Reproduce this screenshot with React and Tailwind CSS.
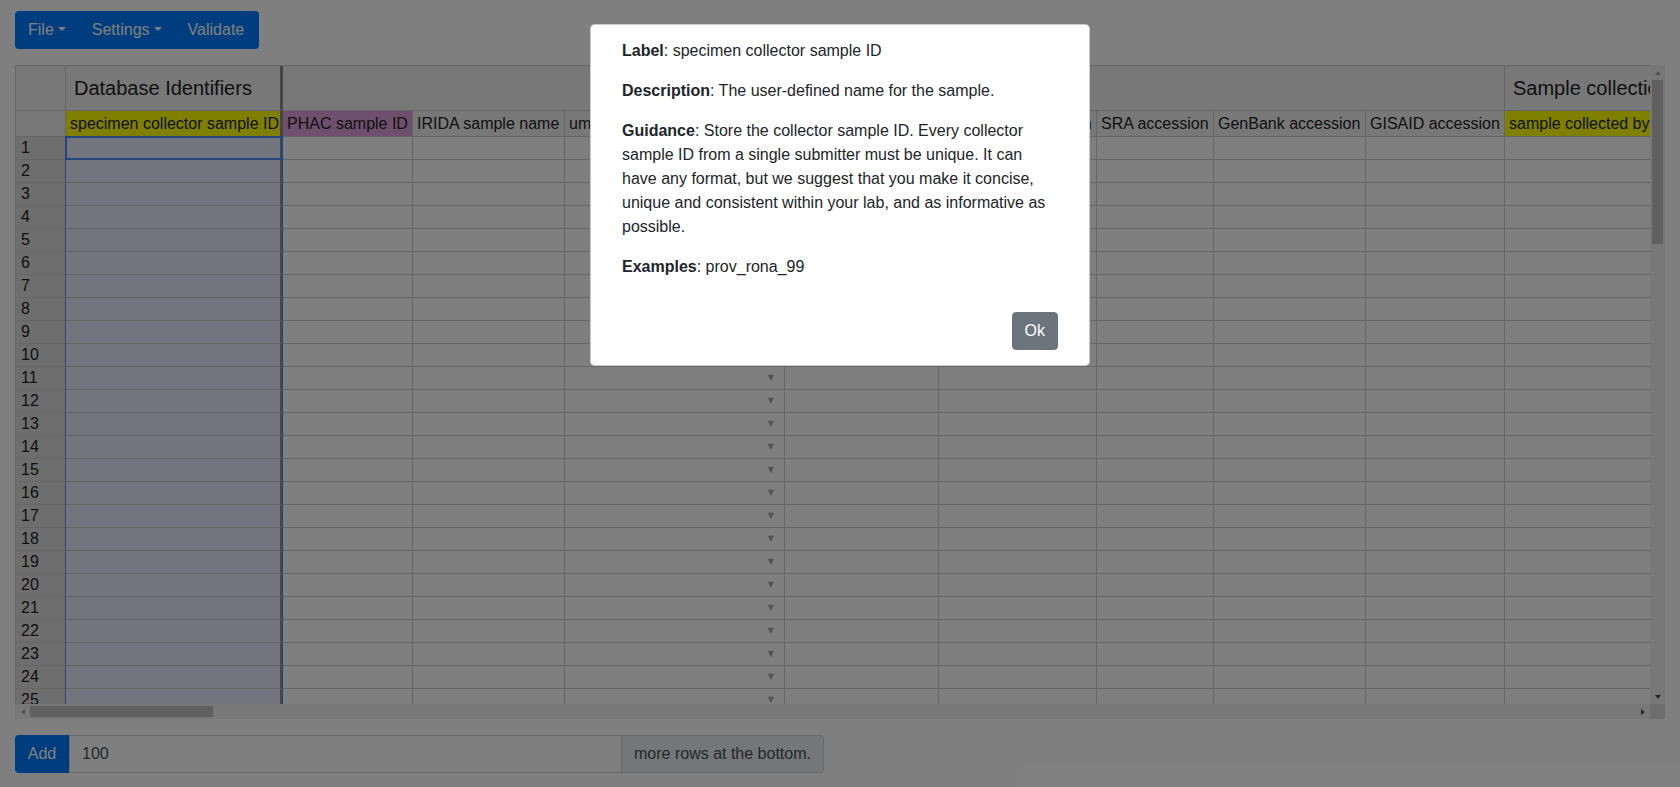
import React from "react";

const cols = [
  { w: "w-[217px] border-r-[3px] border-r-[#8c8c8c]", head: "specimen collector sample ID", hb: "bg-[#ffff00]", sel: true },
  { w: "w-[130px]", head: "PHAC sample ID", hb: "bg-[#dda0dd]" },
  { w: "w-[152px]", head: "IRIDA sample name", hb: "bg-[#f0f0f0]" },
  { w: "w-[220px]", head: "umbrella bioproject accession", hb: "bg-[#f0f0f0]", arrow: true },
  { w: "w-[154px]", head: "bioproject accession", hb: "bg-[#f0f0f0]" },
  { w: "w-[158px]", head: "biosample accession", hb: "bg-[#f0f0f0]" },
  { w: "w-[117px]", head: "SRA accession", hb: "bg-[#f0f0f0]" },
  { w: "w-[152px]", head: "GenBank accession", hb: "bg-[#f0f0f0]" },
  { w: "w-[139px]", head: "GISAID accession", hb: "bg-[#f0f0f0]" },
  { w: "w-[300px]", head: "sample collected by", hb: "bg-[#ffff00]" },
  { w: "w-[260px]", head: "sample collector contact email", hb: "bg-[#f0f0f0]" },
];

const rows = Array.from({ length: 27 }, (_, i) => i + 1);

function Caret() {
  return (
    <span className="ml-[4px] inline-block w-0 h-0 border-l-[4.8px] border-r-[4.8px] border-t-[4.8px] border-l-transparent border-r-transparent border-t-white relative top-[-1px]" />
  );
}

export default function App() {
  return (
    <div className="relative w-[1680px] h-[787px] overflow-hidden bg-white text-[#212529] text-[16px] font-['Liberation_Sans',Arial,sans-serif]">
      {/* toolbar */}
      <div className="pt-[11px] px-[15px] flex">
        <div className="flex h-[38px] rounded-[4px] bg-[#007bff] text-white leading-[24px]">
          <div className="flex items-center px-[13px]">File<Caret /></div>
          <div className="flex items-center px-[13px]">Settings<Caret /></div>
          <div className="flex items-center pl-[13px] pr-[15px]">Validate</div>
        </div>
      </div>

      {/* grid */}
      <div className="mt-[16px] mx-[15px] w-[1650px] flex flex-col">
        <div className="flex h-[639px]">
          <div className="relative w-[1635px] h-[639px] overflow-hidden">
            <div className="border-t border-l border-[#cccccc] w-max text-[#222222]">
              {/* group header row */}
              <div className="flex h-[45px]">
                <div className="shrink-0 w-[50px] bg-[#f0f0f0] border-r border-b border-[#cccccc]" />
                <div className="shrink-0 w-[217px] bg-[#f0f0f0] border-b border-[#cccccc] border-r-[3px] border-r-[#8c8c8c] flex items-center pl-[8px] text-[20px] whitespace-nowrap overflow-hidden">
                  Database Identifiers
                </div>
                <div className="shrink-0 w-[1222px] bg-[#f0f0f0] border-r border-b border-[#cccccc]" />
                <div className="shrink-0 w-[560px] bg-[#f0f0f0] border-r border-b border-[#cccccc] flex items-center pl-[8px] text-[20px] whitespace-nowrap overflow-hidden">
                  Sample collection and processing
                </div>
              </div>
              {/* column header row */}
              <div className="flex h-[26px]">
                <div className="shrink-0 w-[50px] bg-[#f0f0f0] border-r border-b border-[#cccccc]" />
                {cols.map((c, i) => (
                  <div
                    key={i}
                    className={`shrink-0 border-r border-b border-[#cccccc] ${c.w} ${c.hb} flex items-center pl-[4px] whitespace-nowrap overflow-hidden leading-[20px]`}
                  >
                    {c.head}
                  </div>
                ))}
              </div>
              {/* data rows */}
              {rows.map((r) => (
                <div key={r} className="flex h-[23px]">
                  <div className="shrink-0 w-[50px] bg-[#dcdcdc] border-r border-b border-[#cccccc] pl-[5px] leading-[22px]">
                    {r}
                  </div>
                  {cols.map((c, i) => (
                    <div
                      key={i}
                      className={`shrink-0 border-r border-b border-[#cccccc] ${c.w} ${c.sel ? "bg-[#e8e8fb] border-r-[#5d6a9c]" : "bg-white"} flex items-center justify-end`}
                    >
                      {c.arrow ? (
                        <span className="mr-[10px] text-[8px] leading-[8px] text-[#a8a8a8] font-['DejaVu_Sans',sans-serif]">▼</span>
                      ) : null}
                    </div>
                  ))}
                </div>
              ))}
            </div>
            {/* selection area border */}
            <div className="absolute left-[50px] top-[71px] w-[218px] h-[600px] border-l border-r border-[#4b89ff]" />
            {/* current cell border */}
            <div className="absolute left-[50px] top-[71px] w-[218px] h-[24px] border-2 border-[#4b89ff]" />
          </div>
          {/* vertical scrollbar */}
          <div className="w-[15px] h-[639px] bg-[#f1f1f1] flex flex-col items-center">
            <div className="h-[15px] flex items-center justify-center">
              <span className="w-0 h-0 border-l-[3.5px] border-r-[3.5px] border-b-[4px] border-l-transparent border-r-transparent border-b-[#a3a3a3]" />
            </div>
            <div className="w-[11px] h-[164px] bg-[#c1c1c1]" />
            <div className="flex-1" />
            <div className="h-[15px] flex items-center justify-center">
              <span className="w-0 h-0 border-l-[3.5px] border-r-[3.5px] border-t-[4px] border-l-transparent border-r-transparent border-t-[#505050]" />
            </div>
          </div>
        </div>
        {/* horizontal scrollbar */}
        <div className="flex h-[15px]">
          <div className="w-[1635px] h-[15px] bg-[#f1f1f1] flex items-center">
            <div className="w-[15px] h-[15px] flex items-center justify-center">
              <span className="w-0 h-0 border-t-[3.5px] border-b-[3.5px] border-r-[4px] border-t-transparent border-b-transparent border-r-[#a3a3a3]" />
            </div>
            <div className="w-[183px] h-[11px] bg-[#c1c1c1]" />
            <div className="flex-1" />
            <div className="w-[15px] h-[15px] flex items-center justify-center">
              <span className="w-0 h-0 border-t-[3.5px] border-b-[3.5px] border-l-[4px] border-t-transparent border-b-transparent border-l-[#505050]" />
            </div>
          </div>
          <div className="w-[15px] h-[15px] bg-[#dcdcdc]" />
        </div>
      </div>

      {/* add rows */}
      <div className="mt-[16px] px-[15px] flex">
        <div className="flex h-[38px] leading-[24px]">
          <div className="w-[54px] flex items-center justify-center bg-[#007bff] text-white rounded-l-[4px]">Add</div>
          <div className="w-[553px] flex items-center px-[12px] border border-[#ced4da] bg-white text-[#495057]">100</div>
          <div className="flex items-center px-[12px] border border-l-0 border-[#ced4da] bg-[#e9ecef] text-[#495057] rounded-r-[4px] whitespace-nowrap">
            more rows at the bottom.
          </div>
        </div>
      </div>

      {/* backdrop */}
      <div className="absolute inset-0 bg-black/50" />

      {/* modal */}
      <div className="absolute left-[590px] top-[24px] w-[500px] bg-white border border-black/20 rounded-[4.8px] leading-[24px]">
        <div className="px-[31px] pt-[14px]">
          <p className="mb-[16px]"><b>Label</b>: specimen collector sample ID</p>
          <p className="mb-[16px]"><b>Description</b>: The user-defined name for the sample.</p>
          <p className="mb-[16px]">
            <b>Guidance</b>: Store the collector sample ID. Every collector sample ID from a single submitter must be unique. It can have any format, but we suggest that you make it concise, unique and consistent within your lab, and as informative as possible.
          </p>
          <p className="mb-[16px]"><b>Examples</b>: prov_rona_99</p>
        </div>
        <div className="flex justify-end pt-[17px] pb-[15px] pr-[31px]">
          <div className="h-[38px] px-[12px] flex items-center rounded-[4px] bg-[#6c757d] border border-[#6c757d] text-white">Ok</div>
        </div>
      </div>
    </div>
  );
}
